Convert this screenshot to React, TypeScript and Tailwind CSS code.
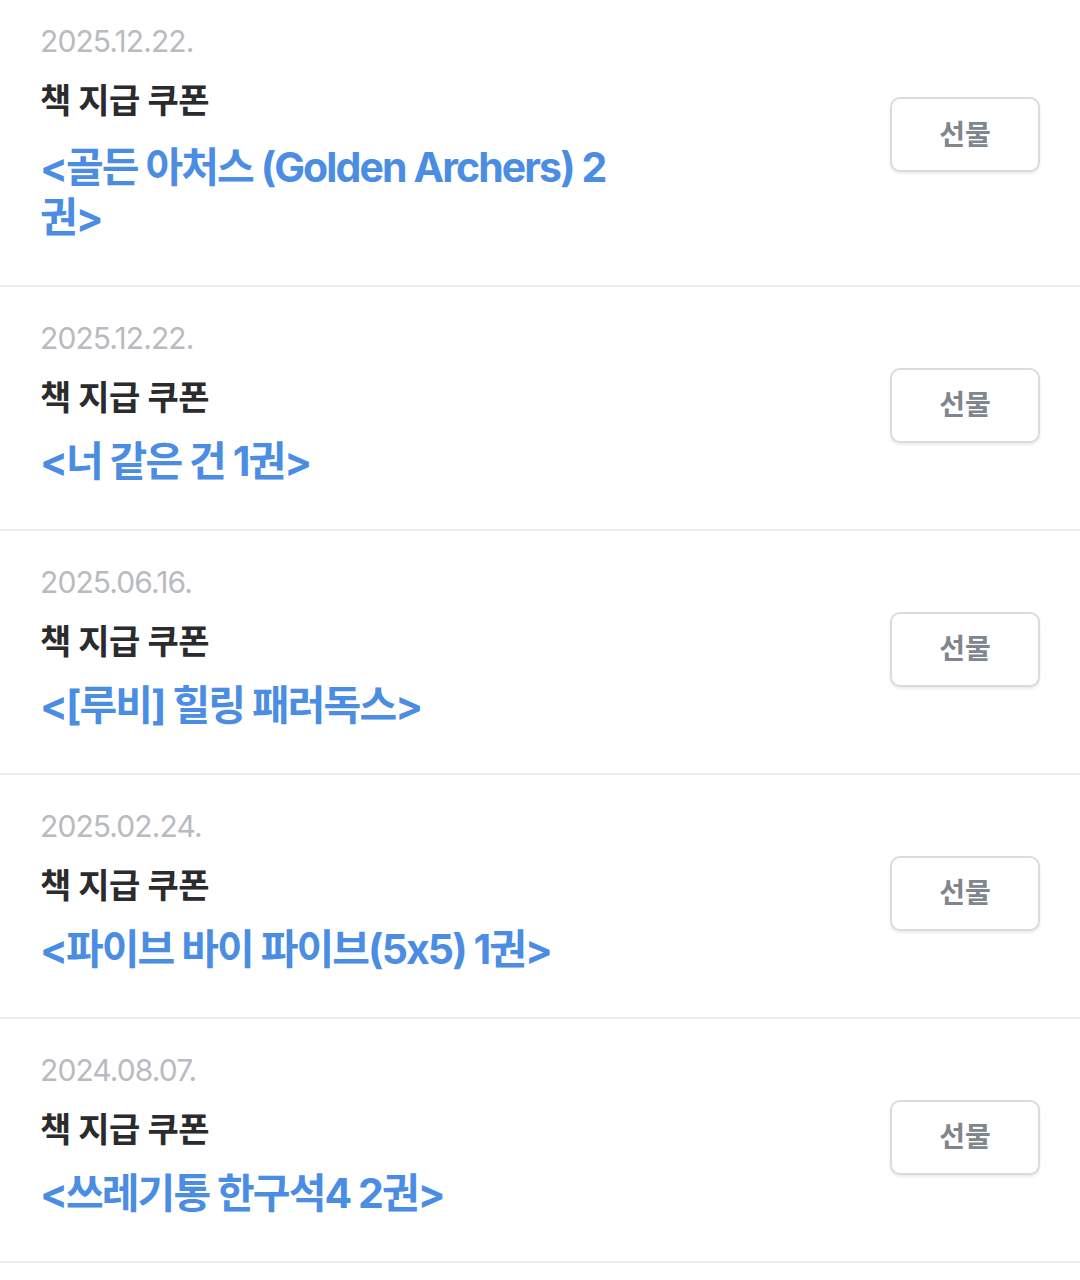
const coupons = [
  { date: "2025.12.22.", title: "<골든 아처스 (Golden Archers) 2권>" },
  { date: "2025.12.22.", title: "<너 같은 건 1권>" },
  { date: "2025.06.16.", title: "<[루비] 힐링 패러독스>" },
  { date: "2025.02.24.", title: "<파이브 바이 파이브(5x5) 1권>" },
  { date: "2024.08.07.", title: "<쓰레기통 한구석4 2권>" },
];

const font = "font-['Inter','Noto_Sans_CJK_KR',sans-serif]";

export default function App() {
  return (
    <div className={`min-h-[1280px] bg-white ${font}`}>
      <ul className="-mt-[10px]">
        {coupons.map((c, i) => (
          <li
            key={i}
            className="flex items-center justify-between border-b-2 border-[#ebebef] pl-[40px] pr-[40px] pt-[31px] pb-[43px]"
          >
            <div className="max-w-[580px]">
              <p className="text-[30px] leading-[40px] tracking-[-0.9px] text-[#b8bbc0]">
                {c.date}
              </p>
              <p className="mt-[16px] text-[34px] font-bold leading-[48px] tracking-[-0.5px] text-[#2b2b2d]">
                책 지급 쿠폰
              </p>
              <p
                className={`${i === 0 ? "mt-[17px]" : "mt-[14px]"} text-[41px] font-bold leading-[50px] tracking-[-1.9px] text-[#4a8de2]`}
              >
                {c.title}
              </p>
            </div>
            <button className="mt-[6px] flex h-[75px] w-[150px] items-center justify-center rounded-[10px] border-2 border-[#d9dcdf] bg-white text-[28px] font-bold text-[#80868d] shadow-[0_2px_3px_rgba(0,0,0,0.08)]">
              선물
            </button>
          </li>
        ))}
      </ul>
    </div>
  );
}
